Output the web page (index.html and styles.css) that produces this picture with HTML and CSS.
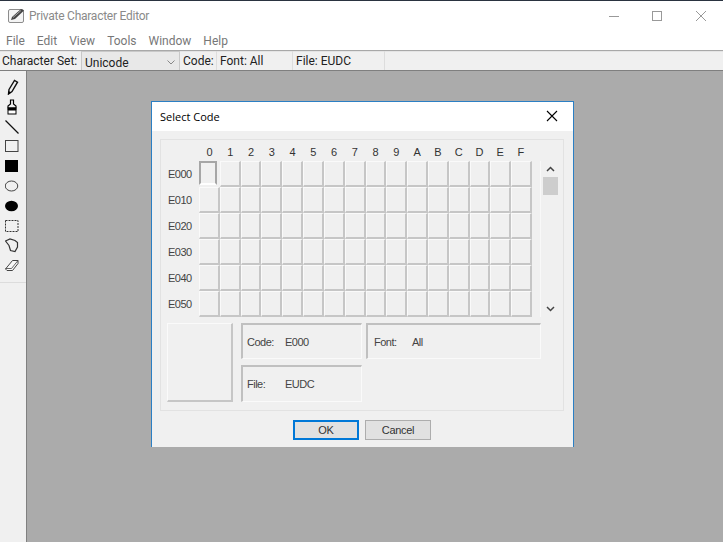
FILE: index.html
```html
<!DOCTYPE html>
<html lang="en">
<head>
    <meta charset="UTF-8">
    <title>Private Character Editor</title>
    <link rel="stylesheet" href="styles.css">
</head>
<body>
    <div class="app">
        <div class="titlebar">
            <svg class="app-icon" width="17" height="15" viewBox="0 0 17 15">
                <rect x="0.5" y="1.5" width="15" height="13" rx="1.5" fill="#f4f4f4" stroke="#8c8c8c"/>
                <path d="M3 12 L4 9 L13 1 L16 2.5 L7 11 Z" fill="#444"/>
                <path d="M5 9.5 L13 2.5" stroke="#bbb" stroke-width="0.8"/>
            </svg>
            <span class="title">Private Character Editor</span>
            <div class="win-buttons">
                <svg class="win-btn" width="44" height="28" viewBox="0 0 44 28"><path d="M18 14.5 H28" stroke="#999"/></svg>
                <svg class="win-btn" width="44" height="28" viewBox="0 0 44 28"><rect x="17.5" y="9.5" width="9" height="9" fill="none" stroke="#999"/></svg>
                <svg class="win-btn" width="44" height="28" viewBox="0 0 44 28"><path d="M17 9 L27 19 M27 9 L17 19" stroke="#999"/></svg>
            </div>
        </div>

        <div class="menubar">
            <span>File</span>
            <span>Edit</span>
            <span>View</span>
            <span>Tools</span>
            <span>Window</span>
            <span>Help</span>
        </div>

        <div class="toolbar">
            <span class="tb-label">Character Set:</span>
            <div class="combo">
                <span>Unicode</span>
                <svg width="8" height="5" viewBox="0 0 8 5"><path d="M0.5 0.5 L4 4 L7.5 0.5" fill="none" stroke="#888"/></svg>
            </div>
            <span class="tb-cell tb-code">Code:</span>
            <span class="tb-cell tb-font">Font: All</span>
            <span class="tb-cell tb-file">File: EUDC</span>
        </div>

        <div class="main">
            <div class="tools">
                <div class="tool-list">
                    <svg width="14" height="16" viewBox="0 0 14 16"><path d="M4 10.5 L9.5 1.5 L12.5 3.2 L7 12.5 L3.5 15 Z" fill="none" stroke="#111" stroke-width="1.4"/><path d="M3 15.5 L3.6 12 L6.2 13.4 Z" fill="#000"/></svg>
                    <svg width="14" height="16" viewBox="0 0 14 16"><path d="M5.5 1 H8.5 V5 L11 7 V9 H3 V7 L5.5 5 Z" fill="#f0f0f0" stroke="#000" stroke-width="1.2"/><rect x="2.5" y="8.5" width="9" height="2.5" fill="#000"/><rect x="3" y="11" width="8" height="4" fill="#fff" stroke="#000"/></svg>
                    <svg width="14" height="16" viewBox="0 0 14 16"><path d="M0.5 1.5 L13.5 14.5" stroke="#111" stroke-width="1.2"/></svg>
                    <svg width="14" height="16" viewBox="0 0 14 16"><rect x="0.5" y="2.5" width="12.5" height="11" fill="none" stroke="#444"/></svg>
                    <svg width="14" height="16" viewBox="0 0 14 16"><rect x="0" y="2" width="13" height="12" fill="#000"/></svg>
                    <svg width="14" height="16" viewBox="0 0 14 16"><ellipse cx="6.5" cy="8" rx="6.25" ry="5" fill="none" stroke="#444"/></svg>
                    <svg width="14" height="16" viewBox="0 0 14 16"><ellipse cx="6.5" cy="8" rx="6.5" ry="5.25" fill="#000"/></svg>
                    <svg width="14" height="16" viewBox="0 0 14 16"><rect x="0.5" y="2.5" width="12.5" height="11" fill="none" stroke="#333" stroke-dasharray="2 1"/></svg>
                    <svg width="14" height="16" viewBox="0 0 14 16"><path d="M0.5 4 L5 2 L10 3.5 L12.5 5.5 L12.5 10 L10 14.5 L5.5 13.5 L4 8.5 Z" fill="none" stroke="#333" stroke-width="1.2"/></svg>
                    <svg width="14" height="16" viewBox="0 0 14 16"><path d="M0.5 12 L7.5 3.5 H13 V6.5 L7.5 13.5 H2 Z" fill="#f8f8f8" stroke="#444"/><path d="M0.5 11.5 H6.5 L13 3.5" fill="none" stroke="#444" stroke-width="0.8"/></svg>
                </div>
            </div>
            <div class="workspace"></div>
        </div>

        <div class="dialog">
            <div class="dlg-title">
                <span>Select Code</span>
                <svg width="12" height="12" viewBox="0 0 12 12"><path d="M1 1 L11 11 M11 1 L1 11" stroke="#000" stroke-width="1.1"/></svg>
            </div>
            <div class="dlg-body">
                <div class="group">
                    <div class="picker">
                        <div class="row-labels">
                            <span>E000</span>
                            <span>E010</span>
                            <span>E020</span>
                            <span>E030</span>
                            <span>E040</span>
                            <span>E050</span>
                        </div>
                        <div class="grid-wrap">
                            <div class="col-labels" id="colLabels"></div>
                            <div class="grid" id="grid"></div>
                        </div>
                        <div class="scroll">
                            <svg width="9" height="6" viewBox="0 0 9 6"><path d="M1 5 L4.5 1.5 L8 5" fill="none" stroke="#444" stroke-width="1.5"/></svg>
                            <div class="thumb"></div>
                            <svg class="scroll-down" width="9" height="6" viewBox="0 0 9 6"><path d="M1 1 L4.5 4.5 L8 1" fill="none" stroke="#444" stroke-width="1.5"/></svg>
                        </div>
                    </div>
                    <div class="info">
                        <div class="preview"></div>
                        <div class="info-col">
                            <div class="sunken code-box"><span class="key">Code:</span><span>E000</span></div>
                            <div class="sunken file-box"><span class="key">File:</span><span>EUDC</span></div>
                        </div>
                        <div class="sunken font-box"><span class="key">Font:</span><span>All</span></div>
                    </div>
                </div>
                <div class="buttons">
                    <button class="btn btn-default">OK</button>
                    <button class="btn">Cancel</button>
                </div>
            </div>
        </div>
    </div>

    <script>
        const cols = "0123456789ABCDEF".split("");
        const colLabels = document.getElementById("colLabels");
        const grid = document.getElementById("grid");

        cols.forEach(function(c) {
            const s = document.createElement("span");
            s.textContent = c;
            colLabels.appendChild(s);
        });

        for (let i = 0; i < 96; i++) {
            const cell = document.createElement("div");
            cell.className = i === 0 ? "cell selected" : "cell";
            grid.appendChild(cell);
        }
    </script>
</body>
</html>
```

FILE: styles.css
```css
* {
    box-sizing: border-box;
}

html, body {
    margin: 0;
    padding: 0;
    height: 100%;
    overflow: hidden;
}

body {
    font-family: Roboto, sans-serif;
    font-size: 12px;
    color: #333;
    background-color: #fff;
}

.app {
    position: relative;
    display: flex;
    flex-direction: column;
    height: 542px;
    border-top: 1px solid #2a3340;
}

.titlebar {
    display: flex;
    align-items: center;
    height: 29px;
    padding-left: 8px;
    flex-shrink: 0;
}

.title {
    margin-left: 4px;
    font-size: 12px;
    letter-spacing: -0.25px;
    color: #8a8a8a;
}

.win-buttons {
    margin-left: auto;
    display: flex;
}

.menubar {
    display: flex;
    align-items: center;
    gap: 12px;
    height: 20px;
    padding-left: 6px;
    padding-top: 1px;
    color: #777;
    flex-shrink: 0;
}

.toolbar {
    display: flex;
    align-items: center;
    height: 21px;
    flex-shrink: 0;
    background-color: #f0f0f0;
    border-top: 1px solid #a8a8a8;
    box-shadow: inset 0 1px 0 #e4e4e4;
    border-bottom: 1px solid #7f7f7f;
    color: #222;
}

.tb-label {
    padding: 1px 0 0 2px;
    width: 81px;
}

.combo {
    display: flex;
    align-items: center;
    justify-content: space-between;
    width: 99px;
    height: 19px;
    padding: 3px 4px 0 3px;
    background-color: #e8e8e8;
    border: 1px solid #c8c8c8;
    border-bottom: none;
    color: #222;
}

.tb-cell {
    height: 19px;
    line-height: 20px;
    padding-left: 3px;
    border-right: 1px solid #ddd;
}

.tb-code {
    width: 37px;
}

.tb-font {
    width: 76px;
}

.tb-file {
    width: 92px;
}

.main {
    display: flex;
    flex: 1;
    min-height: 0;
}

.tools {
    width: 27px;
    background-color: #f0f0f0;
    border-right: 1px solid #808080;
}

.tool-list {
    display: flex;
    flex-direction: column;
    gap: 3.8px;
    height: 212px;
    padding: 8px 0 0 5px;
    border-bottom: 1px solid #dcdcdc;
}

.workspace {
    flex: 1;
    background-color: #ababab;
}

.dialog {
    position: absolute;
    left: 151px;
    top: 100px;
    width: 423px;
    height: 346px;
    display: flex;
    flex-direction: column;
    background-color: #f0f0f0;
    border: 1px solid #2b7fc4;
    border-bottom: none;
    font-family: "Liberation Sans", sans-serif;
    font-size: 11px;
    letter-spacing: -0.5px;
    color: #444;
}

.dlg-title {
    display: flex;
    align-items: center;
    justify-content: space-between;
    height: 29px;
    padding: 0 15px 1px 8px;
    background-color: #fff;
    font-family: "Open Sans", sans-serif;
    font-size: 11px;
    letter-spacing: 0;
    color: #000;
    flex-shrink: 0;
}

.dlg-body {
    flex: 1;
    padding: 8px 9px 0 8px;
}

.group {
    height: 272px;
    padding: 0 0 0 7px;
    border: 1px solid #e2e2e2;
}

.picker {
    display: flex;
    height: 178px;
}

.row-labels {
    width: 31px;
    padding-top: 21px;
    display: grid;
    grid-template-rows: repeat(6, 26px);
    align-items: center;
    flex-shrink: 0;
}

.grid-wrap {
    width: 333px;
    flex-shrink: 0;
}

.col-labels {
    display: grid;
    grid-template-columns: repeat(16, 1fr);
    height: 21px;
    align-items: center;
    text-align: center;
    padding: 2px 1px 0 0;
    color: #333;
}

.grid {
    display: grid;
    grid-template-columns: repeat(16, 1fr);
    grid-template-rows: repeat(6, 26px);
    height: 156px;
}

.cell {
    border-style: solid;
    border-width: 1px 2px 2px 1px;
    border-color: #fafafa #c6c6c6 #c6c6c6 #fafafa;
}

.cell.selected {
    margin: 0 3px 2px 0;
    border-width: 2px;
    border-color: #a6a6a6 #a6a6a6 #fff #a6a6a6;
}

.scroll {
    display: flex;
    flex-direction: column;
    align-items: center;
    width: 19px;
    height: 156px;
    margin-top: 21px;
    margin-left: 8px;
    padding-top: 5px;
    border-left: 1px solid #f8f8f8;
}

.thumb {
    width: 15px;
    height: 18px;
    margin-top: 5px;
    background-color: #cdcdcd;
}

.scroll-down {
    margin-top: auto;
    margin-bottom: 5px;
}

.info {
    display: flex;
    align-items: flex-start;
    margin: 5px 0 0 -1px;
}

.preview {
    width: 66px;
    height: 79px;
    border-style: solid;
    border-width: 1px 2px 2px 1px;
    border-color: #fafafa #c6c6c6 #c6c6c6 #fafafa;
}

.info-col {
    display: flex;
    flex-direction: column;
    gap: 6px;
    margin-left: 8px;
}

.sunken {
    display: flex;
    align-items: center;
    padding-left: 4px;
    border-style: solid;
    border-width: 2px 1px 1px 2px;
    border-color: #c0c0c0 #fafafa #fafafa #c0c0c0;
}

.code-box {
    width: 121px;
    height: 36px;
}

.file-box {
    width: 121px;
    height: 37px;
}

.key {
    width: 38px;
}

.font-box {
    width: 175px;
    height: 36px;
    margin-left: 4px;
    padding-left: 6px;
}

.buttons {
    display: flex;
    gap: 6px;
    padding: 9px 0 0 133px;
}

.btn {
    width: 66px;
    height: 20px;
    padding: 0;
    font-family: "Liberation Sans", sans-serif;
    font-size: 11px;
    letter-spacing: -0.3px;
    color: #333;
    background-color: #e1e1e1;
    border: 1px solid #adadad;
}

.btn-default {
    border: 2px solid #0078d7;
}
```
